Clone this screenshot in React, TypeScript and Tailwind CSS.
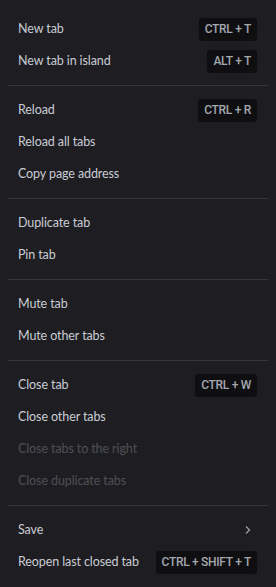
type Item = { label: string; kbd?: string; disabled?: boolean; sub?: boolean };

const groups: Item[][] = [
  [
    { label: "New tab", kbd: "CTRL + T" },
    { label: "New tab in island", kbd: "ALT + T" },
  ],
  [
    { label: "Reload", kbd: "CTRL + R" },
    { label: "Reload all tabs" },
    { label: "Copy page address" },
  ],
  [{ label: "Duplicate tab" }, { label: "Pin tab" }],
  [{ label: "Mute tab" }, { label: "Mute other tabs" }],
  [
    { label: "Close tab", kbd: "CTRL + W" },
    { label: "Close other tabs" },
    { label: "Close tabs to the right", disabled: true },
    { label: "Close duplicate tabs", disabled: true },
  ],
  [
    { label: "Save", sub: true },
    { label: "Reopen last closed tab", kbd: "CTRL + SHIFT + T" },
  ],
];

export default function App() {
  return (
    <div className="w-[276px] h-[587px] bg-[#1e1e22] pt-[13px] px-2 font-['Lato',sans-serif] overflow-hidden">
      {groups.map((group, gi) => (
        <div key={gi}>
          {gi > 0 && (
            <div className="py-2">
              <div className="h-px bg-[#36363c]" />
            </div>
          )}
          {group.map((item) => (
            <div
              key={item.label}
              className="h-8 flex items-center justify-between pl-[10px] pr-[11px] whitespace-nowrap"
            >
              <span
                className={
                  "text-[12.5px] tracking-[-0.1px] " +
                  (item.disabled ? "text-[#4e4f55]" : "text-[#c9ccd4]")
                }
              >
                {item.label}
              </span>
              {item.kbd && (
                <span className="h-[23px] px-[6px] flex items-center rounded-[3px] bg-[#0f0f11] text-[#a3a7b0] text-[12px] font-medium tracking-[-0.3px] font-['Roboto',sans-serif]">
                  {item.kbd}
                </span>
              )}
              {item.sub && (
                <svg width="8" height="10" viewBox="0 0 8 10" className="mr-[5px]">
                  <path d="M2 1.5 L5.5 5 L2 8.5" fill="none" stroke="#9a9ca3" strokeWidth="1.3" />
                </svg>
              )}
            </div>
          ))}
        </div>
      ))}
    </div>
  );
}
